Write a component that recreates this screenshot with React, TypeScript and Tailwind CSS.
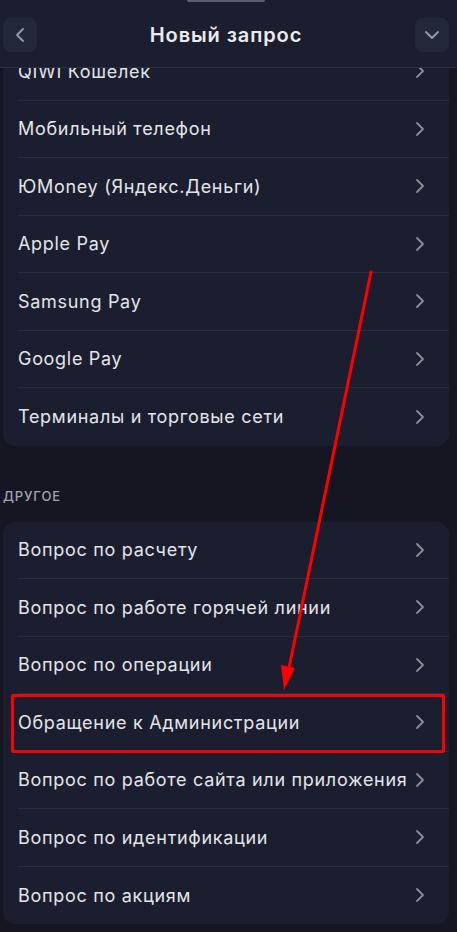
import React from 'react';

const firstGroup = [
  'QIWI Кошелек',
  'Мобильный телефон',
  'ЮMoney (Яндекс.Деньги)',
  'Apple Pay',
  'Samsung Pay',
  'Google Pay',
  'Терминалы и торговые сети',
];

const otherGroup = [
  'Вопрос по расчету',
  'Вопрос по работе горячей линии',
  'Вопрос по операции',
  'Обращение к Администрации',
  'Вопрос по работе сайта или приложения',
  'Вопрос по идентификации',
  'Вопрос по акциям',
];

const Chevron = () => (
  <svg width="10" height="16" viewBox="0 0 10 16" fill="none" className="shrink-0">
    <path d="M2 2l6 6-6 6" stroke="#8b8d97" strokeWidth="1.8" strokeLinecap="round" strokeLinejoin="round" />
  </svg>
);

const Row = ({ label, last, highlight }: { label: string; last?: boolean; highlight?: boolean }) => (
  <div className="relative pl-[15px] h-[57.5px]">
    <div className={`flex h-full items-center justify-between pr-[24px] ${last ? '' : 'border-b border-[#2a2d40]'}`}>
      <span className="text-[18px] tracking-[0.7px] text-[#e4e5ea] whitespace-nowrap">{label}</span>
      <Chevron />
    </div>
    {highlight && (
      <div className="absolute left-[8px] right-[4px] top-[0px] bottom-[-1px] border-[3px] border-[#ff0000] rounded-[2px] pointer-events-none" />
    )}
  </div>
);

export default function App() {
  return (
    <div
      className="relative w-[457px] h-[932px] overflow-hidden bg-[#141621]"
      style={{ fontFamily: 'Inter, "Noto Sans", sans-serif' }}
    >
      {/* header over scrolled content */}
      <header className="absolute top-0 left-0 right-0 z-10 h-[68px] bg-[#1b1e2e] border-b border-[#2b2f44]">
        <div className="absolute top-0 left-[187px] w-[78px] h-[2px] rounded-b bg-[#5c5f6b]" />
        <div className="flex h-full items-center justify-between pl-[3px] pr-[8px] pt-[2px]">
          <button className="w-[34px] h-[34px] rounded-lg bg-[#23273a] flex items-center justify-center">
            <svg width="10" height="16" viewBox="0 0 10 16" fill="none">
              <path d="M8 2L2 8l6 6" stroke="#9a9ca6" strokeWidth="1.8" strokeLinecap="round" strokeLinejoin="round" />
            </svg>
          </button>
          <h1 className="text-[20px] font-semibold tracking-[0.9px] text-[#ececf0]">Новый запрос</h1>
          <button className="w-[34px] h-[34px] rounded-lg bg-[#23273a] flex items-center justify-center">
            <svg width="16" height="10" viewBox="0 0 16 10" fill="none">
              <path d="M2 2l6 6 6-6" stroke="#9a9ca6" strokeWidth="1.8" strokeLinecap="round" strokeLinejoin="round" />
            </svg>
          </button>
        </div>
      </header>

      <div className="pl-[3px] pr-[8px] pt-[43px]">
        <div className="rounded-b-xl bg-[#1b1e2e]">
          {firstGroup.map((l, i) => (
            <Row key={l} label={l} last={i === firstGroup.length - 1} />
          ))}
        </div>

        <div className="pt-[42px] pb-[18px] text-[13px] font-medium tracking-[0.9px] text-[#a3a5ae] leading-[16px]">
          ДРУГОЕ
        </div>

        <div className="rounded-xl bg-[#1b1e2e]">
          {otherGroup.map((l, i) => (
            <Row key={l} label={l} last={i === otherGroup.length - 1} highlight={i === 3} />
          ))}
        </div>
      </div>

      {/* annotation arrow */}
      <svg className="absolute left-0 top-0 pointer-events-none" width="457" height="932" viewBox="0 0 457 932">
        <line x1="371" y1="272" x2="289" y2="668" stroke="#ff0000" strokeWidth="3" strokeLinecap="round" />
        <polygon points="284,690 281,665 295,668" fill="#ff0000" />
      </svg>
    </div>
  );
}
